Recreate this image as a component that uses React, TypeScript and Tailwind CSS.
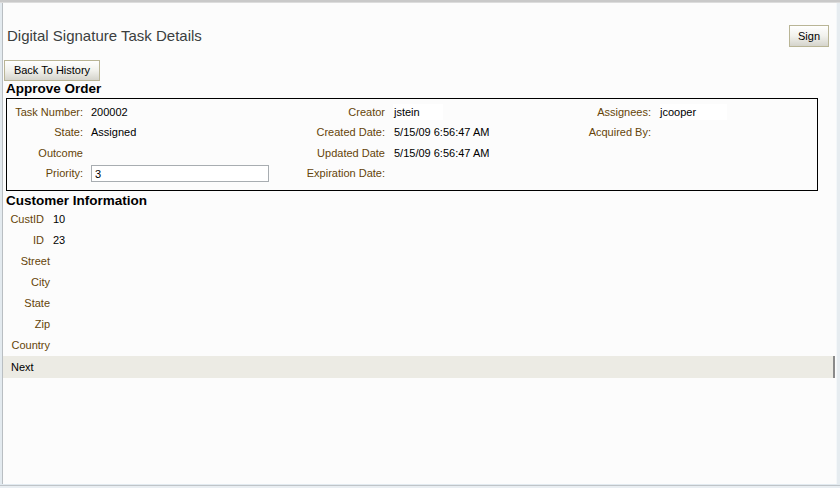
import React from 'react';

const font = { fontFamily: '"Liberation Sans", Arial, sans-serif' };

// brown label text used all over the form
const lbl = 'text-[#654408]';

function Cell({ children, right, className = '' }: { children?: React.ReactNode; right?: boolean; className?: string }) {
    return (
        <div className={`flex items-center ${right ? 'justify-end' : ''} ${className}`}>
            {children}
        </div>
    );
}

function Button({ label, className = '' }: { label: string; className?: string }) {
    return (
        <button
            className={`block h-[21px] border border-[#b9b596] bg-gradient-to-b from-white via-[#f1f1ec] to-[#d5d4cc] text-[11px] leading-[19px] text-black ${className}`}
        >
            {label}
        </button>
    );
}

const customer = [
    { label: 'CustID', value: '10', w: 'w-[41px]' },
    { label: 'ID', value: '23', w: 'w-[41px]' },
    { label: 'Street', value: '', w: 'w-[47px]' },
    { label: 'City', value: '', w: 'w-[47px]' },
    { label: 'State', value: '', w: 'w-[47px]' },
    { label: 'Zip', value: '', w: 'w-[47px]' },
    { label: 'Country', value: '', w: 'w-[47px]' },
];

export default function App() {
    return (
        <div className="w-[840px] h-[488px] flex flex-col bg-[#e9eef2] overflow-hidden" style={font}>
            <div className="h-[3px] bg-[#c9c9c9] border-b border-[#dcdcdc]" />
            <div className="flex flex-1 min-h-0">
                <div className="w-[2px] bg-[#e3eaef]" />
                <div className="w-[1px] bg-[#b9bec2]" />

                {/* Main content */}
                <div className="flex-1 bg-[#fcfcfc] flex flex-col">
                    <div className="flex h-[44px] items-end justify-between pl-[4px] pr-[7px]">
                        <h1 className="text-[15px] text-[#3b3f3f] leading-[22px]">Digital Signature Task Details</h1>
                        <Button label="Sign" className="w-[40px] h-[22px]" />
                    </div>

                    <div className="mt-[13px] ml-[1px]">
                        <Button label="Back To History" className="w-[96px]" />
                    </div>

                    <h2 className="ml-[3px] text-[13.5px] font-bold leading-[16px] text-black">Approve Order</h2>

                    <div className="mt-[1px] ml-[3px] w-[812px] border border-black pt-[3px] pb-[6px]">
                        <div className="grid grid-cols-[76px_212px_90px_186px_80px_1fr] grid-rows-[20px_21px_20px_21px] text-[11px] text-black">
                            <Cell right className={lbl}>Task Number:</Cell>
                            <Cell className="pl-[8px]">200002</Cell>
                            <Cell right className={lbl}>Creator</Cell>
                            <Cell className="pl-[8px]">
                                <span className="bg-white w-[50px] pl-[1px]">jstein</span>
                            </Cell>
                            <Cell right className={lbl}>Assignees:</Cell>
                            <Cell className="pl-[9px]">
                                <span className="bg-white w-[67px]">jcooper</span>
                            </Cell>

                            <Cell right className={lbl}>State:</Cell>
                            <Cell className="pl-[8px]">Assigned</Cell>
                            <Cell right className={lbl}>Created Date:</Cell>
                            <Cell className="pl-[9px]">5/15/09 6:56:47 AM</Cell>
                            <Cell right className={lbl}>Acquired By:</Cell>
                            <Cell />

                            <Cell right className={lbl}>Outcome</Cell>
                            <Cell />
                            <Cell right className={lbl}>Updated Date</Cell>
                            <Cell className="pl-[9px]">5/15/09 6:56:47 AM</Cell>
                            <Cell />
                            <Cell />

                            <Cell right className={lbl}>Priority:</Cell>
                            <Cell className="pl-[8px]">
                                <input
                                    defaultValue="3"
                                    className="w-[178px] h-[17px] border border-[#a8adb1] bg-white px-[3px] text-[11px] text-black outline-none"
                                    style={font}
                                />
                            </Cell>
                            <Cell right className={lbl}>Expiration Date:</Cell>
                            <Cell />
                            <Cell />
                            <Cell />
                        </div>
                    </div>

                    <h2 className="mt-[2px] ml-[3px] text-[13.5px] font-bold leading-[16px] text-black">Customer Information</h2>

                    <div className="flex flex-col text-[11px]">
                        {customer.map((r) => (
                            <div key={r.label} className="flex h-[21px] items-center">
                                <span className={`${r.w} text-right ${lbl}`}>{r.label}</span>
                                <span className="pl-[9px] text-black">{r.value}</span>
                            </div>
                        ))}
                    </div>

                    <div className="flex h-[22px] items-center bg-[#ecebe4] border-r-2 border-[#8a8a8a] mr-[1px] pl-[8px] text-[11px] text-black">
                        Next
                    </div>

                    <div className="flex-1" />
                </div>

                <div className="w-[1px] bg-[#f4f7f9]" />
                <div className="w-[3px] bg-[#e6ecf0]" />
            </div>
            <div className="h-[1px] bg-[#e2eaf0]" />
            <div className="h-[1px] bg-[#bfc4c8]" />
            <div className="h-[2px] bg-[#e9eef2]" />
        </div>
    );
}
